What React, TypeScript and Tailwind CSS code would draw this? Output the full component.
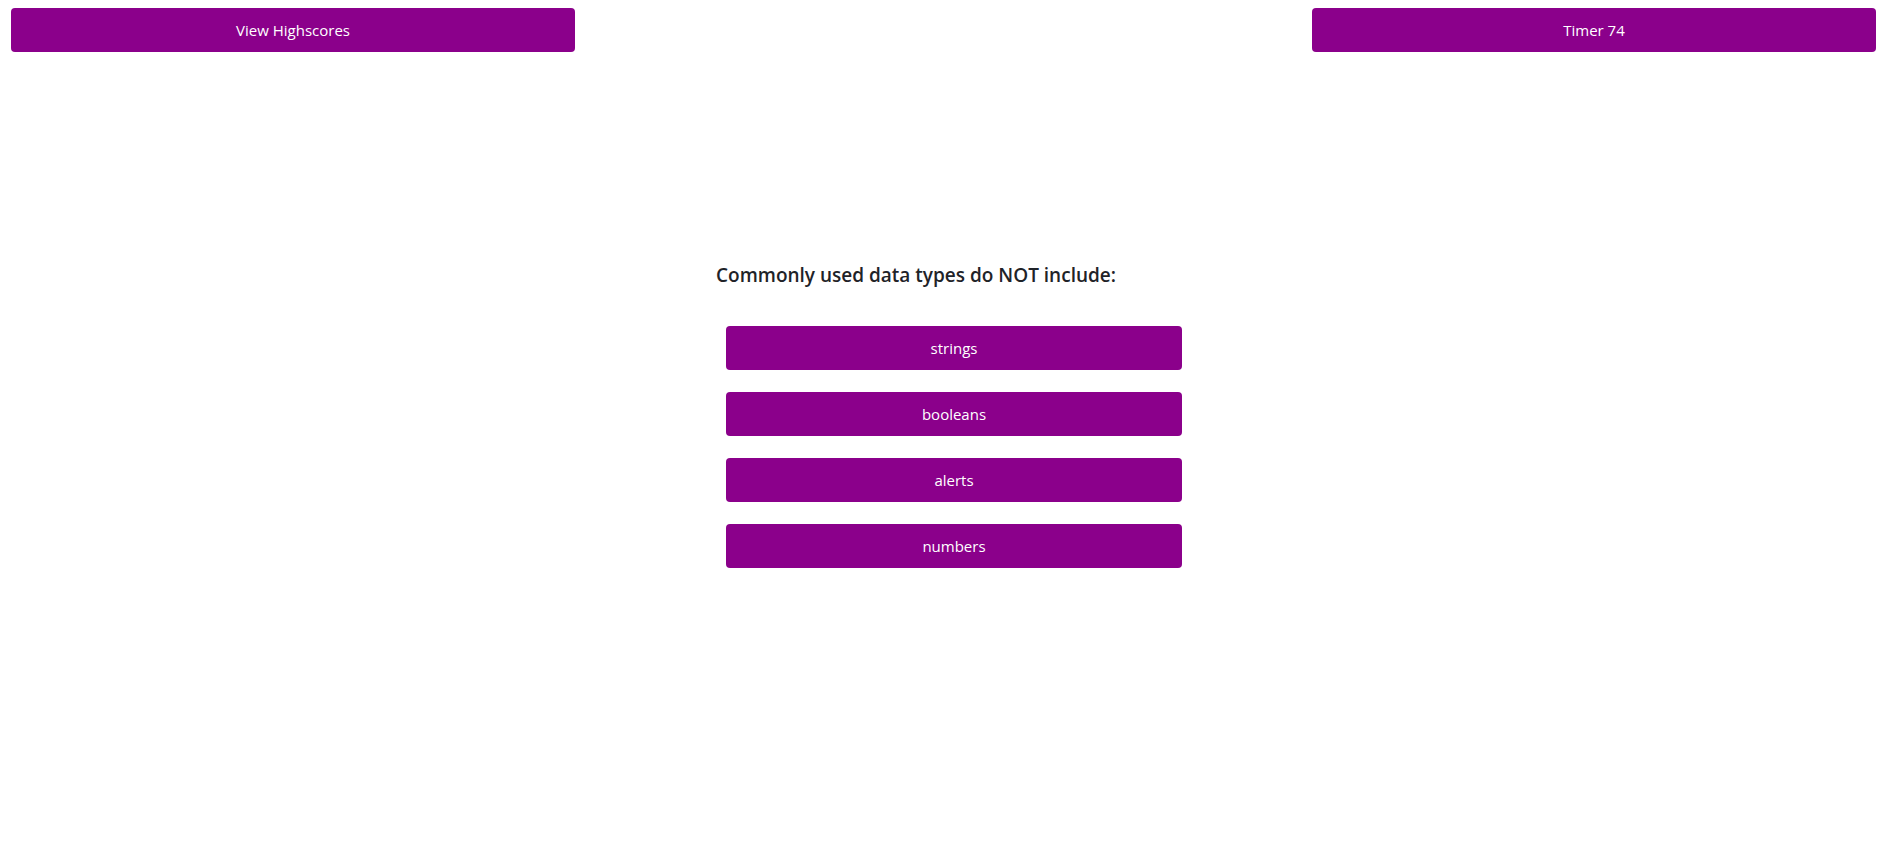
import React from 'react'

const answers = ['strings', 'booleans', 'alerts', 'numbers']

export default function App() {
  return (
    <div className="min-h-screen bg-white font-['Open_Sans',sans-serif]">
      {/* Top bar */}
      <header className="flex justify-between pl-[11px] pr-[10px] pt-[8px]">
        <button className="w-[564px] h-[44px] rounded-[4px] bg-[#8b008b] text-white text-[15px]">
          View Highscores
        </button>
        <button className="w-[564px] h-[44px] rounded-[4px] bg-[#8b008b] text-white text-[15px]">
          Timer 74
        </button>
      </header>

      {/* Question card */}
      <main className="mx-auto w-[454px] pt-[210px]">
        <h3 className="text-[19px] font-semibold text-[#1f2328] leading-[26px] whitespace-nowrap">
          Commonly used data types do NOT include:
        </h3>
        <div className="mt-[38px] ml-[10px] flex flex-col gap-[22px]">
          {answers.map((a) => (
            <button
              key={a}
              className="w-[456px] h-[44px] rounded-[4px] bg-[#8b008b] text-white text-[15px]"
            >
              {a}
            </button>
          ))}
        </div>
      </main>
    </div>
  )
}
